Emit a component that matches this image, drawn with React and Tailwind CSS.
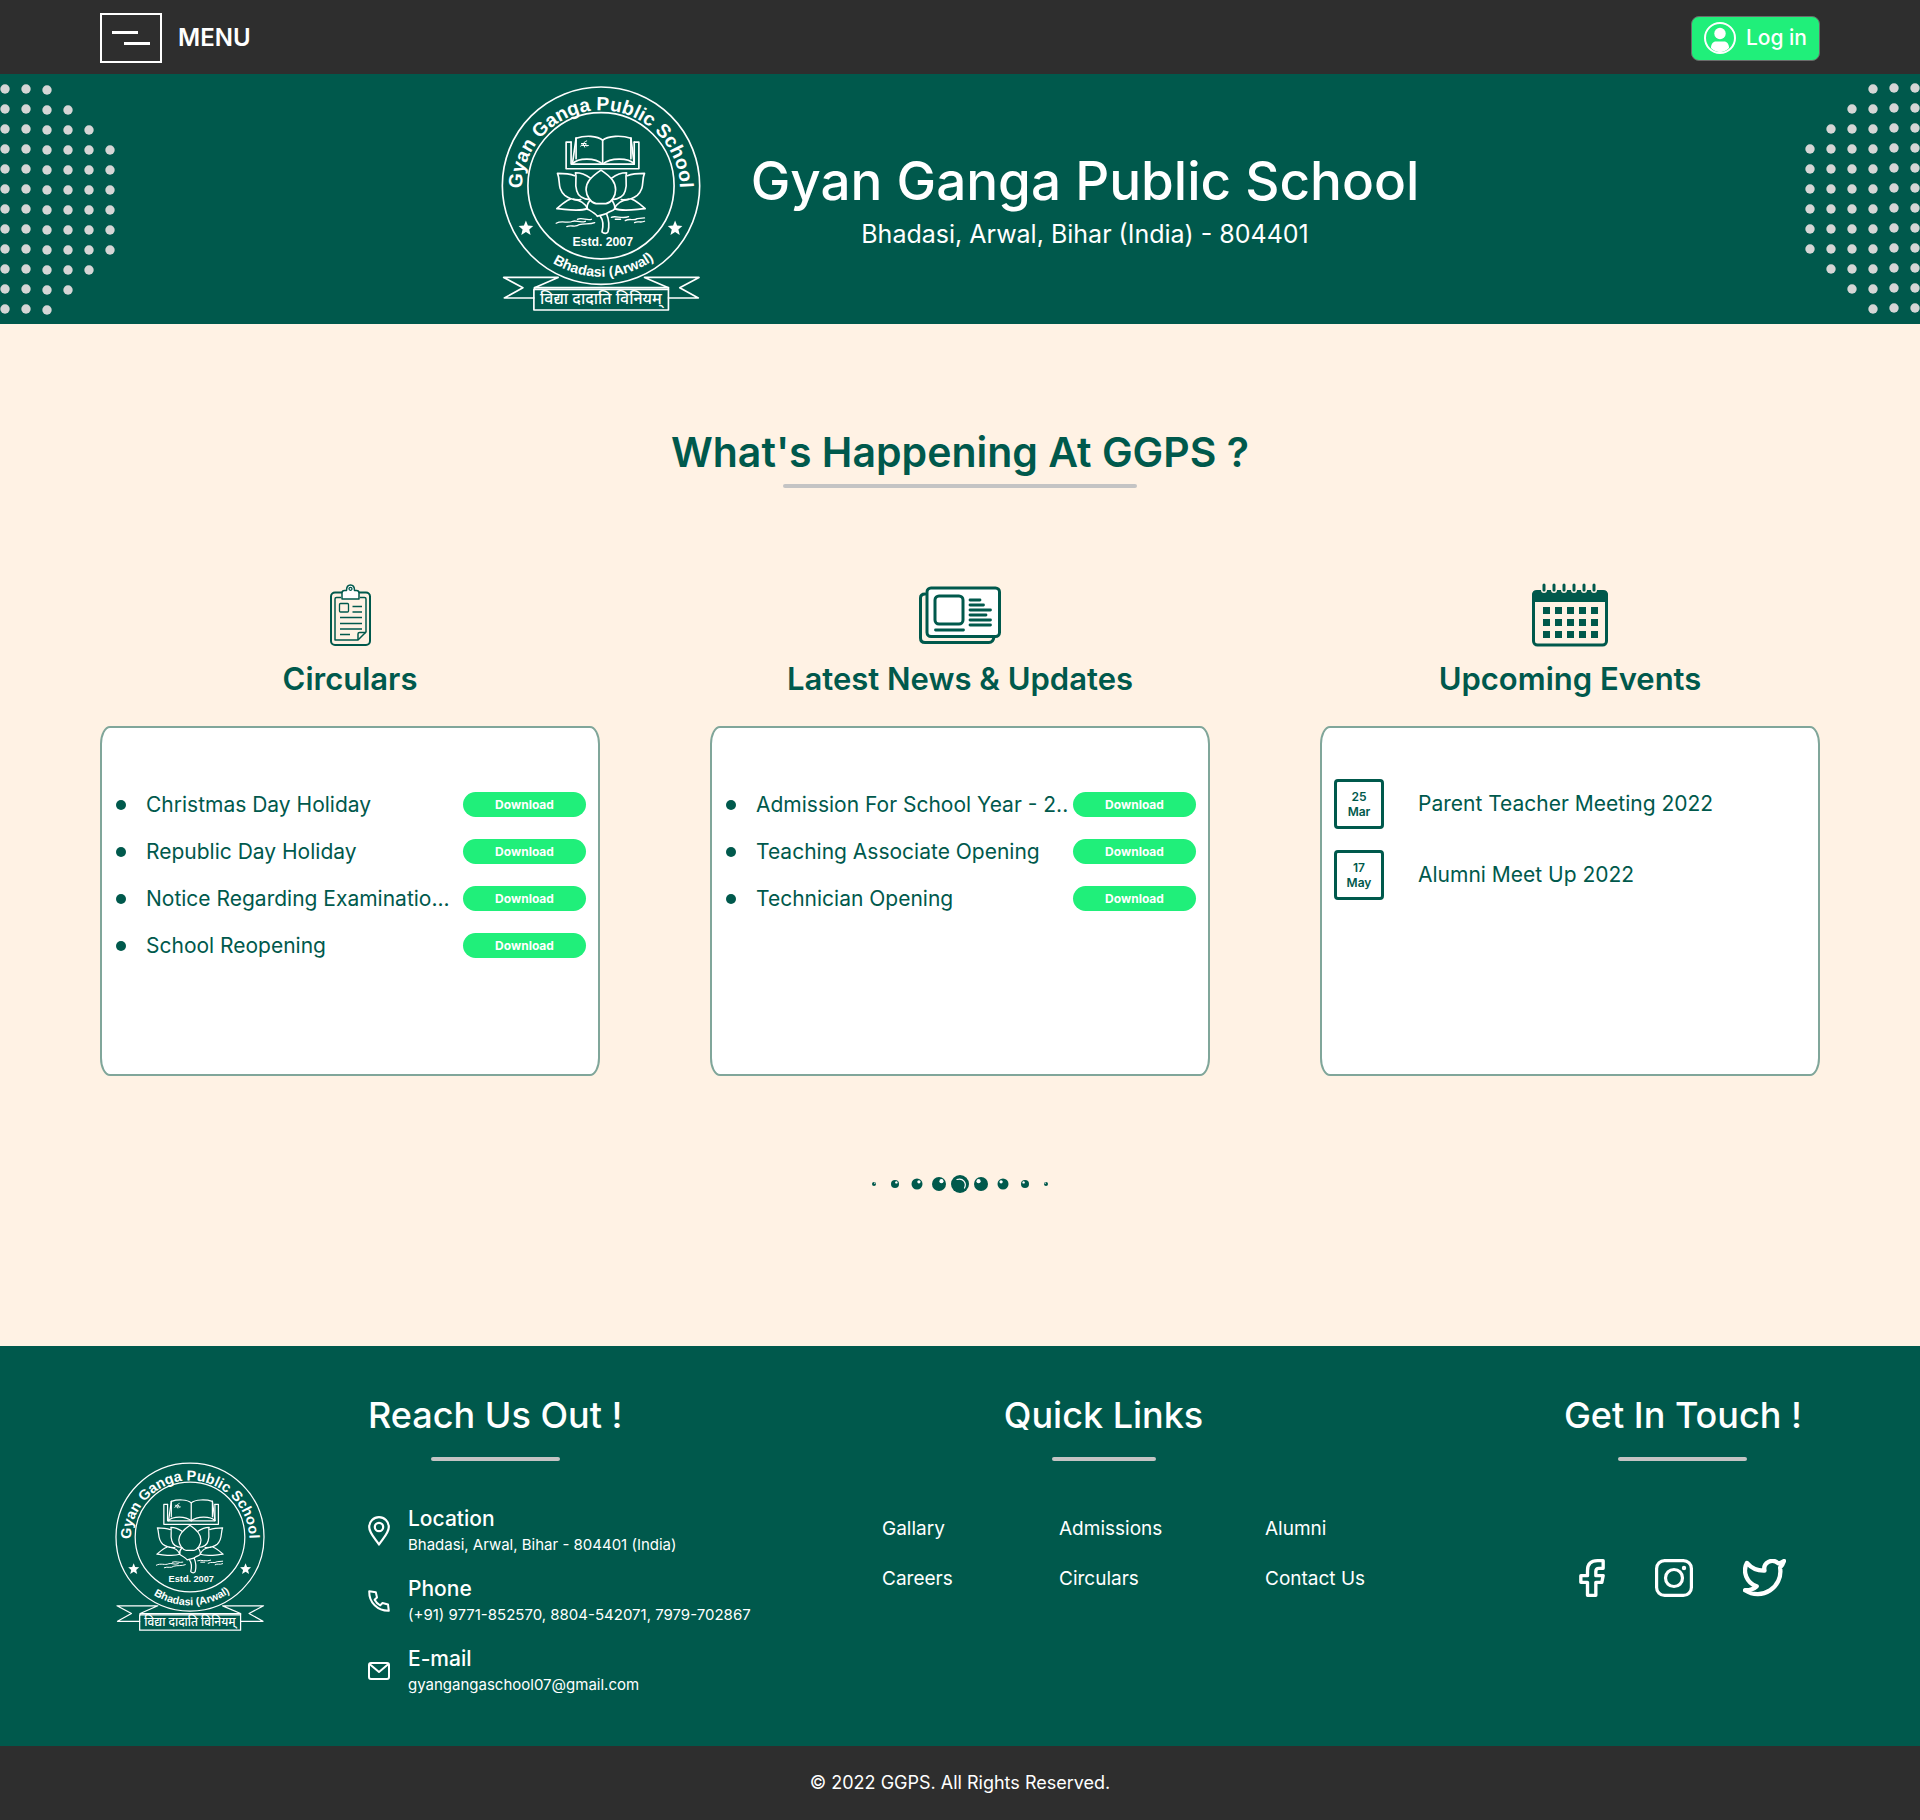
import { useId } from "react";
import { Twitter } from "lucide-react";

function SchoolSeal({ className }) {
  const id = useId();
  const top = id + "top";
  const bottom = id + "bottom";
  return (
    <svg
      viewBox="32 33 602 680"
      className={className}
      fill="none"
      stroke="#ffffff"
      strokeWidth="5"
      strokeLinejoin="round"
      strokeLinecap="round"
      role="img"
      aria-label="Gyan Ganga Public School seal"
    >
      <defs>
        <path id={top} d="M95 344 A238 238 0 0 1 571 344" />
        <path id={bottom} d="M59 333 A274 274 0 0 0 607 333" />
      </defs>
      <circle cx="333" cy="333" r="297" />
      <circle cx="333" cy="333" r="220" />

      {/* lettering round the ring */}
      <g fill="#ffffff" stroke="none" fontFamily="Liberation Sans, Arial, sans-serif" fontWeight="700">
        <text fontSize="58">
          <textPath href={"#" + top} startOffset="2">Gyan Ganga Public School</textPath>
        </text>
        <text fontSize="43" textAnchor="middle">
          <textPath href={"#" + bottom} startOffset="51%">Bhadasi (Arwal)</textPath>
        </text>
        <text x="247" y="514" fontSize="37">Estd.</text>
        <text x="347" y="514" fontSize="37">2007</text>
      </g>

      {/* stars */}
      <path fill="#ffffff" stroke="none" d="M107 438l6 15 16 1-12 11 4 16-14-9-14 9 4-16-12-11 16-1z" />
      <path fill="#ffffff" stroke="none" d="M556 438l6 15 16 1-12 11 4 16-14-9-14 9 4-16-12-11 16-1z" />

      {/* open book */}
      <path d="M243 202H228V282H447V202H433" />
      <path d="M243 202V268H433V202" />
      <path d="M258 190L247 267M423 190L433 267" />
      <path d="M258 190C285 181 322 182 338 196C354 182 396 181 423 190" />
      <path d="M338 196V268" />
      <path d="M258 190V252M423 190V252" />
      <path d="M247 267C265 248 315 248 338 268C361 248 415 248 433 267" />
      <path strokeWidth="3" d="M272 214C278 206 284 200 290 198M274 206H288M276 212H295M280 208L284 217M286 206L290 214" />

      {/* lotus */}
      <path d="M333 286C300 308 288 324 288 345C289 366 303 384 318 387H348C363 384 377 366 377 345C377 324 366 308 333 286Z" />
      <path d="M301 310C286 299 270 294 256 294C262 310 252 325 260 348C264 364 280 374 300 375" />
      <path d="M365 310C380 299 396 294 410 294C404 310 414 325 406 348C402 364 386 374 366 375" />
      <path d="M254 303C238 297 220 296 202 296C212 318 200 340 224 362C236 372 252 376 272 375" />
      <path d="M412 303C428 297 446 296 464 296C454 318 466 340 442 362C430 372 414 376 394 375" />
      <path d="M240 374C224 380 212 392 200 402C230 404 264 412 292 402C286 386 268 376 250 374" />
      <path d="M426 374C442 380 454 392 466 402C436 404 402 412 374 402C380 386 398 376 416 374" />
      <path d="M300 377C292 386 290 396 292 403C304 410 316 416 322 425C334 420 348 420 354 414C360 410 370 408 374 403C376 396 372 386 366 377" />
      <path d="M331 425C342 440 340 456 336 472C342 478 350 478 354 472C358 456 358 438 350 418" />

      {/* water */}
      <path strokeWidth="4" d="M198 446C216 436 232 448 248 440C258 436 270 446 286 440M230 456C244 450 256 460 268 450C284 446 300 450 314 444M262 434C276 428 290 438 304 434" />
      <path strokeWidth="4" d="M364 428C378 422 396 434 416 426M376 434H392M406 438C420 430 430 440 442 432L464 430M434 444C444 438 452 446 464 440" />

      {/* ribbon */}
      <path d="M131 645H536V707H131Z" />
      <path d="M133 640H536" />
      <path d="M131 671H42L98 640L40 609H204L133 640V645" />
      <path d="M536 671H626L570 640L628 609H464L536 640V645" />
      <text
        x="333"
        y="690"
        fontSize="48"
        fontWeight="500"
        textAnchor="middle"
        fill="#ffffff"
        stroke="none"
        fontFamily="Noto Sans, Noto Sans Devanagari, sans-serif"
      >
        विद्या दादाति विनियम्
      </text>
    </svg>
  );
}

const dotColumns = [
  [0, 12],
  [0, 12],
  [0, 12],
  [1, 11],
  [2, 10],
  [3, 9],
];

function DotPattern({ mirrored }) {
  return (
    <svg viewBox="0 0 116 250" className="h-[250px] w-[116px] shrink-0" fill="#d6d6d6" aria-hidden="true">
      {dotColumns.map(([from, to], col) =>
        Array.from({ length: to - from }, (_, i) => (
          <circle
            key={col + "-" + i}
            cx={mirrored ? 111 - col * 21 : 5 + col * 21}
            cy={(mirrored ? 14 : 15) + (col > 1 ? 1 : 0) + (from + i) * 20}
            r="4.7"
          />
        ))
      )}
    </svg>
  );
}

function UserIcon() {
  return (
    <svg viewBox="0 0 32 32" className="size-8" aria-hidden="true">
      <circle cx="16" cy="16" r="15" fill="none" stroke="#fff" strokeWidth="2" />
      <circle cx="16" cy="11.500" r="5.700" fill="#fff" />
      <path fill="#fff" d="M7 26C7 22 9 19.500 12 19.500H20C23 19.500 25 22 25 26C20 31.500 12 31.500 7 26Z" />
    </svg>
  );
}

function ClipboardIcon() {
  return (
    <svg viewBox="0 0 41 62" className="h-[62px] w-[41px]" fill="none" stroke="#00594c" strokeWidth="1.300" strokeLinejoin="round" aria-hidden="true">
      <rect x="1" y="8.500" width="39" height="52.500" rx="4" strokeWidth="2" />
      <path d="M11 13.500H6.500Q5 13.500 5 15V56H28L36 48V15Q36 13.500 34.500 13.500H30" strokeWidth="1.500" />
      <path d="M28 56V50Q28 48.500 29.500 48.500H36" strokeWidth="1.500" />
      <path d="M12 15V9Q12 6.500 14.500 6.500H16.500C16.500 2.500 18 1 20.500 1C23 1 24.500 2.500 24.500 6.500H26.500Q29 6.500 29 9V15Z" fill="#fff" strokeWidth="1.500" />
      <circle cx="20.500" cy="4.800" r="1.500" />
      <rect x="9.500" y="19.500" width="9" height="8.500" rx="1" />
      <path d="M22.500 22.500H32M22.500 28H32M10 33.500H32M10 39.500H32M10 45H32M10 50.500H20" />
    </svg>
  );
}

function NewsIcon() {
  return (
    <svg viewBox="0 0 82 58" className="h-[58px] w-[82px]" fill="none" stroke="#00594c" strokeWidth="3" strokeLinecap="round" strokeLinejoin="round" aria-hidden="true">
      <path d="M6 8C3 8 1.500 9.500 1.500 12V52C1.500 55 3 56.500 6 56.500H70C73 56.500 74.500 54 75 51" />
      <rect x="8" y="2" width="72.500" height="48.500" rx="4" fill="#fff" />
      <rect x="16" y="10" width="28" height="28" rx="4" />
      <path strokeWidth="2.800" d="M16.500 44H44.500M51 14H61M51 19H64.500M51 24H71.500M51 29H67M51 34H71.500M51 39H71.500" />
    </svg>
  );
}

function CalendarIcon() {
  return (
    <svg viewBox="0 0 76 64" className="h-16 w-[76px]" aria-hidden="true">
      <path fill="#00594c" d="M0 12Q0 7 5 7H71Q76 7 76 12V19H0Z" />
      <rect x="1.500" y="9" width="73" height="53" rx="4" fill="none" stroke="#00594c" strokeWidth="3" />
      {[12, 22, 32, 42, 52, 62].map((x) => (
        <g key={x} strokeLinecap="round">
          <path d={`M${x} 2V7`} stroke="#fff2e4" strokeWidth="6" />
          <path d={`M${x} 2V7`} stroke="#00594c" strokeWidth="3" />
        </g>
      ))}
      {[24, 36, 48].map((y) =>
        [11, 23, 35, 47, 59].map((x) => (
          <rect key={x + "-" + y} x={x} y={y} width="7" height="7" fill="#00594c" />
        ))
      )}
    </svg>
  );
}

function BeadDivider() {
  const beads = [
    [4, 2],
    [25, 4],
    [47, 5.5],
    [69, 7],
    [111, 7],
    [133, 5.5],
    [155, 4],
    [176, 2],
  ];
  return (
    <svg viewBox="0 0 180 20" className="h-5 w-[180px]" fill="#00594c" aria-hidden="true">
      {beads.map(([cx, r]) => (
        <g key={cx}>
          <circle cx={cx} cy="10" r={r} />
          <circle cx={cx < 90 ? cx + r * 0.35 : cx - r * 0.35} cy={10 - r * 0.4} r={r * 0.3} fill="#fff" />
        </g>
      ))}
      <circle cx="90" cy="10" r="9" />
      <path d="M87 5.500C93 3.500 97 9 94.500 14" fill="none" stroke="#fff" strokeWidth="1.200" strokeLinecap="round" />
    </svg>
  );
}

function PinIcon() {
  return (
    <svg viewBox="0 0 22 30" className="h-[30px] w-[22px]" fill="none" stroke="#fff" strokeWidth="2.200" strokeLinejoin="round" aria-hidden="true">
      <path d="M11 28.500C7 22.500 1.200 17 1.200 11A9.800 9.800 0 0 1 20.800 11C20.800 17 15 22.500 11 28.500Z" />
      <circle cx="11" cy="11" r="4.200" />
    </svg>
  );
}

function PhoneIcon() {
  return (
    <svg viewBox="0 0 22 22" className="size-[22px]" fill="none" stroke="#fff" strokeWidth="2" strokeLinejoin="round" aria-hidden="true">
      <path d="M1.200 1.200L7.800 2.200L9 7.500L6.600 9.800C8 12.400 9.600 14.200 12.200 15.400L14.500 13L20 14.500L20.800 20.800C9.500 21 1 12.500 1.200 1.200Z" />
    </svg>
  );
}

function MailIcon() {
  return (
    <svg viewBox="0 0 22 18" className="h-[18px] w-[22px]" fill="none" stroke="#fff" strokeWidth="2" strokeLinejoin="round" aria-hidden="true">
      <rect x="1" y="1" width="20" height="16" rx="2" />
      <path d="M1.500 2L11 10L20.500 2" />
    </svg>
  );
}

function FacebookIcon() {
  return (
    <svg viewBox="115 567 77 114" className="h-[38px] w-[26px]" fill="none" stroke="#fff" strokeWidth="10" strokeLinejoin="round" aria-hidden="true">
      <path d="M187 572H170Q140 572 140 602V617H120V637H140V676H165V637H183L187 617H165V604Q165 595 174 595H187Z" />
    </svg>
  );
}

function InstagramIcon() {
  return (
    <svg viewBox="0 0 38 38" className="size-[38px]" fill="none" stroke="#fff" strokeWidth="3.200" aria-hidden="true">
      <rect x="1.600" y="1.600" width="34.800" height="34.800" rx="8" />
      <circle cx="19" cy="19" r="8.500" />
      <circle cx="29" cy="9" r="2.200" fill="#fff" stroke="none" />
    </svg>
  );
}

function Column({ icon, title, children }) {
  return (
    <section className="flex flex-col items-center">
      <div className="flex h-[66px] items-center">{icon}</div>
      <h3 className="mt-2 text-[31px] leading-[46px] font-semibold">{title}</h3>
      <div className="mt-6 min-h-[350px] w-full rounded-[10px/18px] border-2 border-[#80a69a] bg-white px-3 pt-[51px]">
        {children}
      </div>
    </section>
  );
}

function DownloadList({ items }) {
  return (
    <ul className="flex flex-col gap-[22px] pt-[13px]">
      {items.map((item) => (
        <li key={item} className="flex h-[25px] items-center">
          <span className="mx-[2px] size-[10px] shrink-0 rounded-full bg-[#00594c]" />
          <span className="ml-[18px] flex-1 text-[21px] leading-6 whitespace-nowrap">{item}</span>
          <button type="button" className="h-[25px] w-[123px] shrink-0 rounded-full bg-[#20ef7a] text-xs font-bold text-white">
            Download
          </button>
        </li>
      ))}
    </ul>
  );
}

const events = [
  ["25", "Mar", "Parent Teacher Meeting 2022"],
  ["17", "May", "Alumni Meet Up 2022"],
];

const contacts = [
  [<PinIcon />, "Location", "Bhadasi, Arwal, Bihar - 804401 (India)"],
  [<PhoneIcon />, "Phone", "(+91) 9771-852570, 8804-542071, 7979-702867"],
  [<MailIcon />, "E-mail", "gyangangaschool07@gmail.com"],
];

const quickLinks = ["Gallary", "Admissions", "Alumni", "Careers", "Circulars", "Contact Us"];

function FooterHeading({ children, rule }) {
  return (
    <div className="flex flex-col items-center">
      <h2 className="text-[36px] leading-[52px] font-medium whitespace-nowrap">{children}</h2>
      <span className={"mt-4 h-1 rounded-full bg-[#c4c4c4] " + rule} />
    </div>
  );
}

export default function App() {
  return (
    <div className="min-h-screen bg-[#fff2e4] font-[Inter,'Noto_Sans',sans-serif] text-[#00594c]">
      <nav className="flex h-[74px] items-center justify-between bg-[#2e2e2e] px-[100px] pt-[2px] text-white">
        <button type="button" className="flex items-center gap-4">
          <span className="flex h-[50px] w-[62px] flex-col justify-center gap-2 border-2 border-white px-[10px]">
            <span className="h-[3px] w-[26px] bg-white" />
            <span className="h-[3px] w-[26px] self-end bg-white" />
          </span>
          <span className="text-2xl font-semibold">MENU</span>
        </button>
        <button type="button" className="flex h-[45px] items-center gap-[10px] rounded-lg border border-[#6b6b6b] bg-[#20ef7a] px-3">
          <UserIcon />
          <span className="text-[21px] font-medium">Log in</span>
        </button>
      </nav>

      <header className="flex h-[250px] items-center justify-between bg-[#00594c] text-white">
        <DotPattern />
        <div className="flex items-center gap-[50px]">
          <SchoolSeal className="h-[226px] w-[200px]" />
          <div className="flex flex-col items-center pt-[2px]">
            <h1 className="text-[53px] leading-[68px] font-medium">Gyan Ganga Public School</h1>
            <p className="text-[25px] leading-[38px]">Bhadasi, Arwal, Bihar (India) - 804401</p>
          </div>
        </div>
        <DotPattern mirrored />
      </header>

      <main className="flex flex-col items-center px-[100px] pt-[100px]">
        <h2 className="text-[41px] leading-[56px] font-semibold">What's Happening At GGPS ?</h2>
        <span className="mt-1 h-1 w-[354px] rounded-full bg-[#c4c4c4]" />

        <div className="mt-[94px] grid w-full grid-cols-3 gap-[110px]">
          <Column icon={<ClipboardIcon />} title="Circulars">
            <DownloadList
              items={["Christmas Day Holiday", "Republic Day Holiday", "Notice Regarding Examinatio...", "School Reopening"]}
            />
          </Column>
          <Column icon={<NewsIcon />} title={"Latest News & Updates"}>
            <DownloadList items={["Admission For School Year - 2..", "Teaching Associate Opening", "Technician Opening"]} />
          </Column>
          <Column icon={<CalendarIcon />} title="Upcoming Events">
            <ul className="flex flex-col gap-[21px]">
              {events.map(([day, month, name]) => (
                <li key={name} className="flex items-center gap-[34px]">
                  <span className="flex size-[50px] flex-col items-center justify-center rounded-[4px] border-[3px] border-[#00594c] text-xs leading-[15px] font-semibold">
                    <span>{day}</span>
                    <span>{month}</span>
                  </span>
                  <span className="text-[21px]">{name}</span>
                </li>
              ))}
            </ul>
          </Column>
        </div>

        <div className="pt-[98px] pb-[152px]">
          <BeadDivider />
        </div>
      </main>

      <footer className="text-white">
        <div className="grid min-h-[400px] grid-cols-[253px_514px_1fr_auto] items-start bg-[#00594c] pt-[43px] pr-[118px] pb-[45px] pl-[115px]">
          <SchoolSeal className="mt-[73px] h-[170px] w-[150px]" />

          <section>
            <div className="flex">
              <FooterHeading rule="w-[129px]">Reach Us Out !</FooterHeading>
            </div>
            <ul className="mt-11 flex flex-col gap-[18px]">
              {contacts.map(([icon, label, value]) => (
                <li key={label} className="flex items-center gap-[18px]">
                  <span className="flex w-[22px] shrink-0 justify-center">{icon}</span>
                  <span className="flex flex-col whitespace-nowrap">
                    <span className="text-[21px] leading-[27px] font-medium">{label}</span>
                    <span className="text-[15px] leading-[25px]">{value}</span>
                  </span>
                </li>
              ))}
            </ul>
          </section>

          <section className="justify-self-start">
            <div className="pr-10">
              <FooterHeading rule="w-[104px]">Quick Links</FooterHeading>
            </div>
            <ul className="mt-[54px] grid grid-cols-[177px_206px_100px] gap-y-[22px] text-[19px] leading-7">
              {quickLinks.map((link) => (
                <li key={link}>
                  <a href="#" className="whitespace-nowrap">{link}</a>
                </li>
              ))}
            </ul>
          </section>

          <section className="flex flex-col items-center">
            <FooterHeading rule="w-[129px]">Get In Touch !</FooterHeading>
            <div className="mt-[98px] flex items-center gap-[50px]">
              <a href="#" aria-label="Facebook"><FacebookIcon /></a>
              <a href="#" aria-label="Instagram"><InstagramIcon /></a>
              <a href="#" aria-label="Twitter">
                <Twitter viewBox="1 3 22 19.500" className="h-[38px] w-[43px]" strokeWidth={2.200} />
              </a>
            </div>
          </section>
        </div>
        <p className="flex h-[74px] items-center justify-center bg-[#2e2e2e] text-lg">© 2022 GGPS. All Rights Reserved.</p>
      </footer>
    </div>
  );
}
